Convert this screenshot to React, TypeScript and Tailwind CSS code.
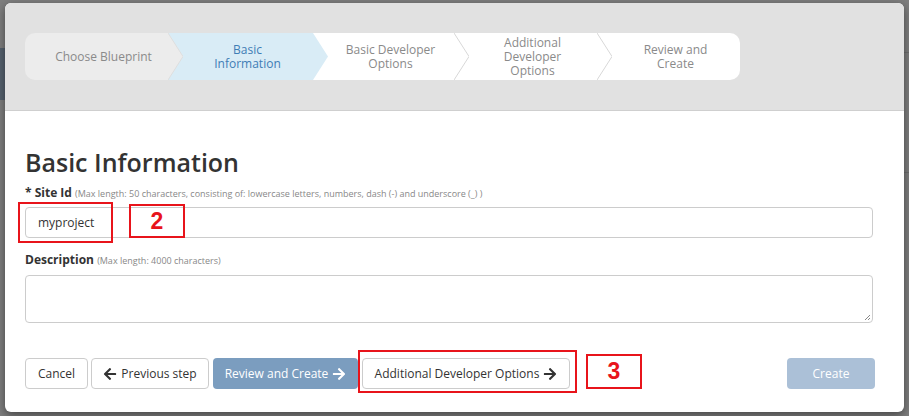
import { FaArrowLeft, FaArrowRight } from 'react-icons/fa';

const font = { fontFamily: '"Open Sans", "Liberation Sans", sans-serif' };

function Arrow({ fill, stroke }: { fill: string; stroke?: string }) {
  // chevron tip that overlaps the next step
  return (
    <svg className="absolute top-0 right-[-15px] z-10" width="15" height="47" viewBox="0 0 15 47">
      <polygon points="0,0 15,23.5 0,47" fill={fill} />
      {stroke && <polyline points="0,0 15,23.5 0,47" fill="none" stroke={stroke} strokeWidth="1" />}
    </svg>
  );
}

export default function App() {
  return (
    <div className="w-[909px] h-[416px] bg-[#7e7e7e] overflow-hidden relative" style={font}>
      {/* faint page behind the overlay */}
      <div className="absolute left-0 top-[48px] w-[6px] h-[52px] bg-[#55616e]" />
      <div className="absolute right-0 top-[52px] w-[6px] h-px bg-[#6e6e6e]" />
      <div className="absolute right-0 top-[172px] w-[6px] h-px bg-[#6e6e6e]" />

      <div className="absolute left-[5px] top-[3px] w-[899px] h-[409px] bg-white rounded-[6px] shadow-[0_3px_10px_rgba(0,0,0,0.45)] flex flex-col">
        {/* header with wizard steps */}
        <div className="h-[108px] bg-[#e1e1e1] rounded-t-[6px] border-b border-[#cfcfcf] pl-[20px] pt-[30px]">
          <div className="flex w-[715px] h-[47px] rounded-[10px] overflow-hidden text-[12px] leading-[14px] text-[#8a8a8a]">
            <div className="relative w-[143px] bg-[#ececec] pl-[14px] flex items-center justify-center text-center">
              Choose Blueprint
              <Arrow fill="#ececec" stroke="#dedede" />
            </div>
            <div className="relative w-[145px] bg-[#d9ecf6] pl-[14px] flex items-center justify-center text-center text-[#3f7db5]">
              Basic<br />Information
              <Arrow fill="#d9ecf6" />
            </div>
            <div className="relative w-[141px] bg-white pl-[14px] flex items-center justify-center text-center">
              Basic Developer<br />Options
              <Arrow fill="#ffffff" stroke="#d8d8d8" />
            </div>
            <div className="relative w-[143px] bg-white pl-[14px] flex items-center justify-center text-center">
              Additional<br />Developer<br />Options
              <Arrow fill="#ffffff" stroke="#d8d8d8" />
            </div>
            <div className="relative w-[143px] bg-white pl-[14px] flex items-center justify-center text-center">
              Review and<br />Create
            </div>
          </div>
        </div>

        {/* body */}
        <div className="relative flex flex-col px-[20px] pt-[32px] text-[#333]">
          <h2 className="text-[25px] leading-[38px] font-semibold text-[#333]">Basic Information</h2>

          <div className="mt-[3px] text-[12px] leading-[18px] font-bold">
            * Site Id{' '}
            <span className="text-[9px] font-normal text-[#888]">
              (Max length: 50 characters, consisting of: lowercase letters, numbers, dash (-) and underscore (_) )
            </span>
          </div>
          <div className="mt-[4px] h-[31px] w-[848px] border border-[#cccccc] rounded-[4px] flex items-center px-[12px] text-[12px] text-[#333]">
            myproject
          </div>

          <div className="mt-[13px] text-[12px] leading-[18px] font-bold">
            Description{' '}
            <span className="text-[9px] font-normal text-[#888]">(Max length: 4000 characters)</span>
          </div>
          <div className="relative mt-[5px] h-[48px] w-[848px] border border-[#cccccc] rounded-[4px]">
            <svg className="absolute right-[1px] bottom-[1px]" width="7" height="7" viewBox="0 0 7 7">
              <path d="M1 6 L6 1 M4 6 L6 4" stroke="#888" strokeWidth="1" />
            </svg>
          </div>

          {/* footer buttons */}
          <div className="mt-[35px] flex items-center text-[12px]">
            <button className="h-[31px] w-[63px] border border-[#cccccc] rounded-[4px] bg-white text-[#333]">Cancel</button>
            <button className="ml-[3px] h-[31px] w-[118px] border border-[#cccccc] rounded-[4px] bg-white text-[#333] flex items-center justify-center gap-[4px]">
              <FaArrowLeft className="text-[14px]" /> Previous step
            </button>
            <button className="ml-[4px] h-[31px] w-[145px] rounded-[4px] bg-[#7b9dbf] text-white flex items-center justify-center gap-[4px]">
              Review and Create <FaArrowRight className="text-[14px]" />
            </button>
            <button className="ml-[4px] h-[31px] w-[208px] border border-[#cccccc] rounded-[4px] bg-white text-[#333] flex items-center justify-center gap-[4px]">
              Additional Developer Options <FaArrowRight className="text-[14px]" />
            </button>
            <button className="ml-auto mr-[9px] h-[31px] w-[88px] rounded-[4px] bg-[#abc0d7] text-white">Create</button>
          </div>

          {/* red annotation boxes */}
          <div className="absolute left-[13px] top-[91px] w-[95px] h-[41px] border-2 border-[#e8141b]" />
          <div className="absolute left-[124px] top-[93px] w-[56px] h-[34px] border-2 border-[#e8141b] flex items-center justify-center text-[#e8141b] text-[23px] font-bold" style={{ fontFamily: '"Liberation Sans", Arial, sans-serif' }}>
            2
          </div>
          <div className="absolute left-[353px] top-[239px] w-[219px] h-[43px] border-2 border-[#e8141b]" />
          <div className="absolute left-[581px] top-[243px] w-[56px] h-[35px] border-2 border-[#e8141b] flex items-center justify-center text-[#e8141b] text-[23px] font-bold" style={{ fontFamily: '"Liberation Sans", Arial, sans-serif' }}>
            3
          </div>
        </div>
      </div>
    </div>
  );
}
